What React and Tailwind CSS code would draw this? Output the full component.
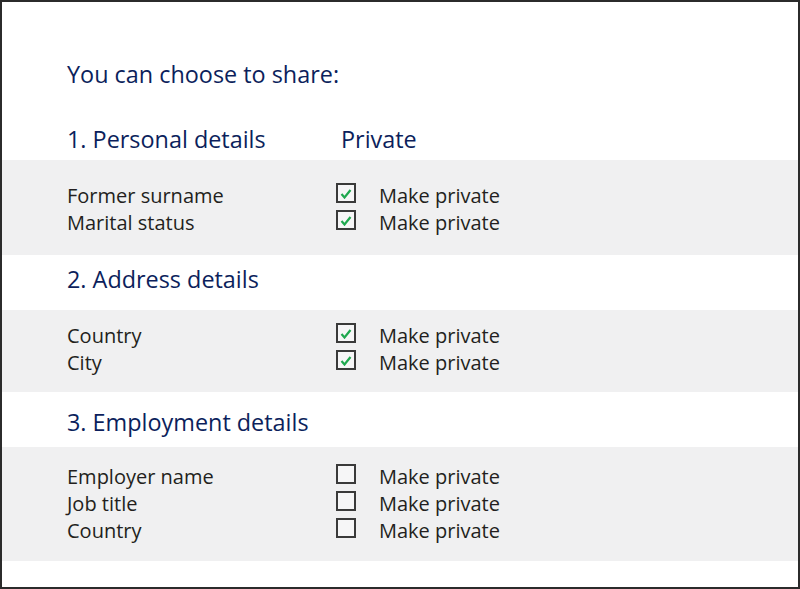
import React from "react";

const sections = [
  {
    title: "1. Personal details",
    showPrivate: true,
    head: "h-[71px] pt-[35px]",
    band: "pt-[22px] pb-[19px]",
    rows: [
      { label: "Former surname", checked: true },
      { label: "Marital status", checked: true },
    ],
  },
  {
    title: "2. Address details",
    head: "h-[55px] pt-[9px]",
    band: "pt-[12px] pb-[16px]",
    rows: [
      { label: "Country", checked: true },
      { label: "City", checked: true },
    ],
  },
  {
    title: "3. Employment details",
    head: "h-[55px] pt-[15px]",
    band: "pt-[16px] pb-[17px]",
    rows: [
      { label: "Employer name", checked: false },
      { label: "Job title", checked: false },
      { label: "Country", checked: false },
    ],
  },
];

const Checkbox = ({ checked }) => (
  <div className="w-[20px] h-[20px] border-2 border-[#3a3a3a] bg-[#f6f6f7] flex items-center justify-center -translate-y-[3px]">
    {checked && (
      <svg width="12" height="10" viewBox="0 0 12 10" className="mt-[3px]">
        <path d="M1.5 5 L4.5 8.5 L10.5 1" fill="none" stroke="#1fa84f" strokeWidth="2.2" />
      </svg>
    )}
  </div>
);

export default function App() {
  return (
    <div
      className="w-[800px] h-[589px] border-2 border-[#2b2b2b] bg-white flex flex-col text-[#231f20]"
      style={{ fontFamily: "'Open Sans', sans-serif" }}
    >
      {/* Title */}
      <div className="mt-[57px] h-[30px] leading-[30px] pl-[65px] text-[23.4px] text-[#0c1f5c]">
        You can choose to share:
      </div>

      {sections.map((s) => (
        <div key={s.title}>
          {/* Section heading */}
          <div className={`${s.head} flex pl-[65px] text-[23.4px] leading-[30px] text-[#0c1f5c]`}>
            <div className="w-[274px]">{s.title}</div>
            {s.showPrivate && <div>Private</div>}
          </div>

          {/* Rows */}
          <div className={`bg-[#f0f0f1] pl-[65px] ${s.band}`}>
            {s.rows.map((r, i) => (
              <div key={i} className="flex items-center h-[27px] text-[20px] leading-[27px]">
                <div className="w-[269px]">{r.label}</div>
                <Checkbox checked={r.checked} />
                <div className="ml-[23px]">Make private</div>
              </div>
            ))}
          </div>
        </div>
      ))}

      <div className="flex-1" />
    </div>
  );
}
